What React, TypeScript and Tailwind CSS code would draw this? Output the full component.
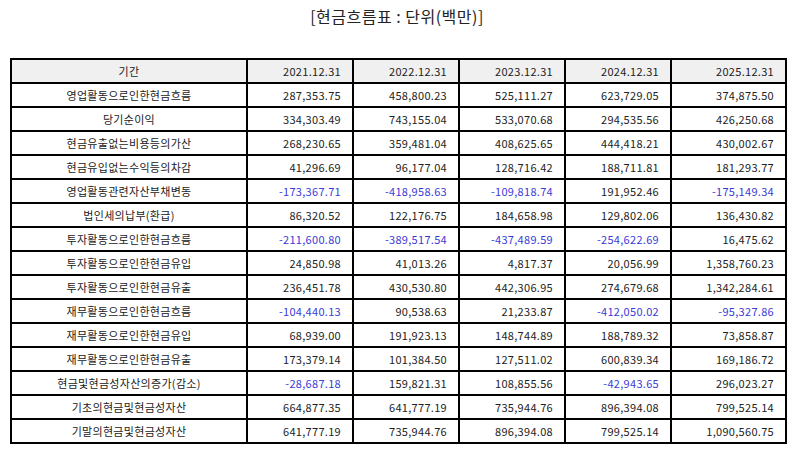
const years = ["2021.12.31", "2022.12.31", "2023.12.31", "2024.12.31", "2025.12.31"];

const rows: [string, string[]][] = [
  ["영업활동으로인한현금흐름", ["287,353.75", "458,800.23", "525,111.27", "623,729.05", "374,875.50"]],
  ["당기순이익", ["334,303.49", "743,155.04", "533,070.68", "294,535.56", "426,250.68"]],
  ["현금유출없는비용등의가산", ["268,230.65", "359,481.04", "408,625.65", "444,418.21", "430,002.67"]],
  ["현금유입없는수익등의차감", ["41,296.69", "96,177.04", "128,716.42", "188,711.81", "181,293.77"]],
  ["영업활동관련자산부채변동", ["-173,367.71", "-418,958.63", "-109,818.74", "191,952.46", "-175,149.34"]],
  ["법인세의납부(환급)", ["86,320.52", "122,176.75", "184,658.98", "129,802.06", "136,430.82"]],
  ["투자활동으로인한현금흐름", ["-211,600.80", "-389,517.54", "-437,489.59", "-254,622.69", "16,475.62"]],
  ["투자활동으로인한현금유입", ["24,850.98", "41,013.26", "4,817.37", "20,056.99", "1,358,760.23"]],
  ["투자활동으로인한현금유출", ["236,451.78", "430,530.80", "442,306.95", "274,679.68", "1,342,284.61"]],
  ["재무활동으로인한현금흐름", ["-104,440.13", "90,538.63", "21,233.87", "-412,050.02", "-95,327.86"]],
  ["재무활동으로인한현금유입", ["68,939.00", "191,923.13", "148,744.89", "188,789.32", "73,858.87"]],
  ["재무활동으로인한현금유출", ["173,379.14", "101,384.50", "127,511.02", "600,839.34", "169,186.72"]],
  ["현금및현금성자산의증가(감소)", ["-28,687.18", "159,821.31", "108,855.56", "-42,943.65", "296,023.27"]],
  ["기초의현금및현금성자산", ["664,877.35", "641,777.19", "735,944.76", "896,394.08", "799,525.14"]],
  ["기말의현금및현금성자산", ["641,777.19", "735,944.76", "896,394.08", "799,525.14", "1,090,560.75"]],
];

const cell = "h-6 border-2 border-black px-0 text-[11px] leading-none tracking-[0.3px]";

export default function App() {
  return (
    <div
      className="w-[794px] h-[452px] bg-white text-[#222]"
      style={{ fontFamily: '"Noto Sans CJK KR", "Noto Sans", sans-serif' }}
    >
      <div className="h-[36px] pt-[5px] text-center text-[16px] leading-[22px] tracking-[0.5px]">
        [현금흐름표 : 단위(백만)]
      </div>
      <div className="pt-[22px] pl-[10px]">
        <table className="w-[775px] table-fixed border-collapse">
          <colgroup>
            <col className="w-[236px]" />
            <col className="w-[106px]" />
            <col className="w-[106px]" />
            <col className="w-[106px]" />
            <col className="w-[106px]" />
            <col className="w-[115px]" />
          </colgroup>
          <thead>
            <tr className="bg-[#f0f0f0]">
              <th className={`${cell} text-center font-normal`}>기간</th>
              {years.map((y) => (
                <th key={y} className={`${cell} pr-[11px] text-right font-normal`}>
                  {y}
                </th>
              ))}
            </tr>
          </thead>
          <tbody>
            {rows.map(([label, vals]) => (
              <tr key={label}>
                <td className={`${cell} text-center`}>{label}</td>
                {vals.map((v, i) => (
                  <td
                    key={i}
                    className={`${cell} pr-[11px] text-right ${v.startsWith("-") ? "text-[#3a3ad6]" : ""}`}
                  >
                    {v}
                  </td>
                ))}
              </tr>
            ))}
          </tbody>
        </table>
      </div>
    </div>
  );
}
